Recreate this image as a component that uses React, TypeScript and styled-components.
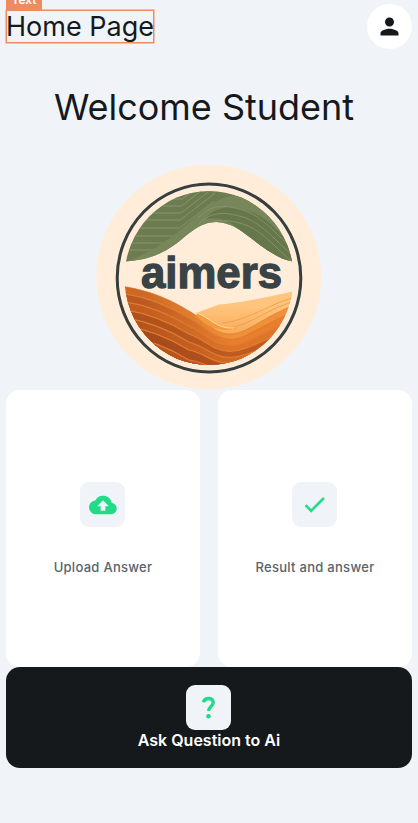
import React from "react";
import styled, { createGlobalStyle } from "styled-components";

const GlobalStyle = createGlobalStyle`
  * { box-sizing: border-box; }
  body { margin: 0; background: #f0f4f9; overflow: hidden; }
`;

const Screen = styled.main`
  height: 823px;
  display: flex;
  flex-direction: column;
  padding: 4px 6px 0;
  background: #f0f4f9;
  color: #15191c;
  font-family: Inter, sans-serif;
`;

const Header = styled.header`
  display: flex;
  justify-content: space-between;
  height: 45px;
`;

const Selection = styled.div`
  position: relative;
  width: 148px;
  height: 33px;
  margin-top: 6px;
  border: 1px solid #ee8b60;
  box-shadow: 0 0 0 0.5px #ee8b60;
`;

const SelectionTag = styled.span`
  position: absolute;
  left: -1px;
  bottom: 100%;
  width: 36px;
  height: 20px;
  background: #ee8b60;
  color: #fff;
  font-size: 12px;
  font-weight: 600;
  line-height: 18px;
  text-align: center;
`;

const PageTitle = styled.h1`
  margin: 0 0 0 -1px;
  font-size: 27px;
  font-weight: 400;
  line-height: 32px;
  letter-spacing: 0;
  white-space: nowrap;
`;

const Avatar = styled.div`
  display: flex;
  align-items: center;
  justify-content: center;
  width: 45px;
  height: 45px;
  border-radius: 50%;
  background: #fff;
`;

const Welcome = styled.h2`
  margin: 36px 0 0;
  padding-right: 10px;
  height: 44px;
  font-size: 36px;
  font-weight: 400;
  line-height: 44px;
  letter-spacing: -0.02px;
  text-align: center;
  white-space: nowrap;
`;

const LogoArt = styled.svg`
  display: block;
  flex: none;
  width: 226px;
  height: 226px;
  margin: 35px auto 0;
`;

const LogoName = styled.text`
  font: 700 45px "Liberation Sans", sans-serif;
  fill: #394244;
  stroke: #394244;
  stroke-width: 1.3px;
`;

const Cards = styled.section`
  display: grid;
  grid-template-columns: 1fr 1fr;
  gap: 18px;
`;

const Card = styled.article`
  display: flex;
  flex-direction: column;
  align-items: center;
  height: 277px;
  padding-top: 92px;
  border-radius: 14px;
  background: #fff;
`;

const IconTile = styled.div<{ $nudge?: number }>`
  display: flex;
  align-items: center;
  justify-content: center;
  flex: none;
  width: 45px;
  height: 45px;
  margin-right: ${(p) => p.$nudge ?? 0}px;
  border-radius: 9px;
  background: #f0f4f9;
`;

const CardLabel = styled.p`
  margin: 30px 0 0;
  color: #57636c;
  font: 450 13px/20px Inter, sans-serif;
  letter-spacing: 0.28px;
  white-space: nowrap;
`;

const AskPanel = styled.section`
  display: flex;
  flex-direction: column;
  align-items: center;
  height: 101px;
  padding-top: 18px;
  border-radius: 14px;
  background: #15191c;
`;

const AskLabel = styled.p`
  margin: 0;
  color: #fff;
  font: 600 16px/21px Inter, sans-serif;
  letter-spacing: 0;
  white-space: nowrap;
`;

const leftContours = [194, 199, 206, 213, 220, 228, 236, 243, 250];

const duneBands = [
  { y: 0, left: "#cc6824", right: "#f0913a" },
  { y: 7, left: "#b9591f", right: "#e77f2d" },
  { y: 15, left: "#c05d20", right: "#dd7529" },
  { y: 23, left: "#ae511c", right: "#bd5b20" },
  { y: 31, left: "#b4541d", right: "#d16825" },
  { y: 39, left: "#a3491a", right: "#b4531e" },
  { y: 49, left: "#b4521c", right: "#bd5820" },
];

const ridge = (y: number) =>
  `M120 ${286 + y}C150 ${290 + y} 171 ${300 + y} 189 ${311 + y}C207 ${321 + y * 0.85} 214 ${335 + y * 0.75} 232 ${334 + y * 0.75}C249 ${333 + y * 0.75} 265 ${315 + y} 300 ${303 + y}`;

function Logo() {
  return (
    <LogoArt viewBox="96 164 226 226" role="img" aria-label="aimers">
      <defs>
        <clipPath id="disc"><ellipse cx="209" cy="278" rx="84.5" ry="87" /></clipPath>
        <clipPath id="hill">
          <path d="M110 180H310V263L293 261.5C283 260 275 255 267 250C248 237 235 222 216 222C199 222 188 235 177 243C162 254 148 260 125 261.5Z" />
        </clipPath>
        {duneBands.map(({ y, left, right }) => (
          <linearGradient key={y} id={`dune${y}`} x1="0" x2="1">
            <stop offset=".12" stopColor={left} />
            <stop offset=".62" stopColor={right} />
          </linearGradient>
        ))}
        <linearGradient id="light" x1="0" y1="1" x2="0" y2="0">
          <stop offset="0" stopColor="#f5a14a" />
          <stop offset=".7" stopColor="#ffc47d" />
        </linearGradient>
      </defs>
      <circle cx="208.7" cy="277" r="112.5" fill="#ffedda" />
      <ellipse cx="209" cy="278" rx="91.8" ry="94" fill="none" stroke="#363e3e" strokeWidth="3" />
      <g clipPath="url(#disc)">
        <g clipPath="url(#hill)" fill="none">
          <rect x="120" y="188" width="180" height="80" fill="#6c7c50" />
          {leftContours.map((y, i) => (
            <path key={y} d={`M120 ${y}H${183 - i * 0.7}L${218 - i * 0.7} ${y - 27}`} stroke="#86946a" strokeWidth="1" />
          ))}
          <path d="M120 263C151 255 172 237 192 220C207 207 217 199 230 196C262 194 283 220 297 263L125 268Z" fill="#77875a" />
          <path d="M205 219C216 206 230 205 244 210C267 214 282 235 300 258V270L272 256C240 233 231 214 205 219Z" fill="#66774b" />
          {[0, 7, 14].map((y) => (
            <path key={y} d={`M198 ${218 + y}C209 ${206 + y} 221 ${204 + y} 239 ${209 + y}C260 ${213 + y} 274 ${233 + y} 300 ${255 + y}`} stroke="#84926a" strokeWidth="1" />
          ))}
        </g>
        <path d="M196 313L219 304.5C240 303 268 297 300 290V345H225Z" fill="url(#light)" />
        <path d="M227 328C251 326 270 306 300 300M222 323C249 321 271 302 300 296" fill="none" stroke="#f4a04d" strokeWidth="1" />
        {duneBands.map(({ y }, i) => (
          <path
            key={y}
            d={`${ridge(y)}V372H120Z`}
            fill={`url(#dune${y})`}
            stroke={i ? "#e37b30" : "#d97427"}
            strokeWidth={i ? 1.2 : 0.6}
          />
        ))}
        <path d="M197 313C211 318 216 329 238 328C225 332 211 331 196 316Z" fill="#f49c3d" />
        <path d="M197 313C211 318 216 329 234 328" fill="none" stroke="#ffdfa3" strokeWidth="1" />
      </g>
      <LogoName x="141" y="287.7" textLength="141" lengthAdjust="spacingAndGlyphs">aimers</LogoName>
    </LogoArt>
  );
}

export default function App() {
  return (
    <>
      <GlobalStyle />
      <Screen>
        <Header>
          <Selection>
            <SelectionTag>Text</SelectionTag>
            <PageTitle>Home Page</PageTitle>
          </Selection>
          <Avatar>
            <svg width="27" height="27" viewBox="0 0 24 24" fill="#15191c">
              <path d="M12 12a4 4 0 1 0 0-8 4 4 0 0 0 0 8Zm0 2c-2.67 0-8 1.34-8 4v2h16v-2c0-2.66-5.33-4-8-4Z" />
            </svg>
          </Avatar>
        </Header>
        <Welcome>Welcome Student</Welcome>
        <Logo />
        <Cards>
          <Card>
            <IconTile $nudge={0.5}>
              <svg width="28" height="28" viewBox="0 0 24 24" fill="#20db88">
                <path d="M19.35 10.04A7.49 7.49 0 0 0 5.35 8.04 6 6 0 0 0 6 20h13a5 5 0 0 0 .35-9.96ZM14 13v4h-4v-4H7l5-5 5 5h-3Z" />
              </svg>
            </IconTile>
            <CardLabel>Upload Answer</CardLabel>
          </Card>
          <Card>
            <IconTile $nudge={0.5}>
              <svg width="27" height="27" viewBox="0 0 24 24" fill="#20db88" stroke="#20db88" strokeWidth="0.4">
                <path d="M9 16.17 4.83 12l-1.42 1.41L9 19 21 7l-1.41-1.41Z" />
              </svg>
            </IconTile>
            <CardLabel>Result and answer</CardLabel>
          </Card>
        </Cards>
        <AskPanel>
          <IconTile $nudge={0.5}>
            <svg width="27" height="27" viewBox="0 0 27 27" fill="none">
              <path d="M8.4 8.3c.7-2.5 2.5-3.8 5-3.8 2.8 0 4.8 1.5 4.8 4.1 0 3.9-4.6 4-4.6 8.4" stroke="#20db88" strokeWidth="3.3" />
              <circle cx="13.5" cy="22.3" r="2.3" fill="#20db88" />
            </svg>
          </IconTile>
          <AskLabel>Ask Question to Ai</AskLabel>
        </AskPanel>
      </Screen>
    </>
  );
}
